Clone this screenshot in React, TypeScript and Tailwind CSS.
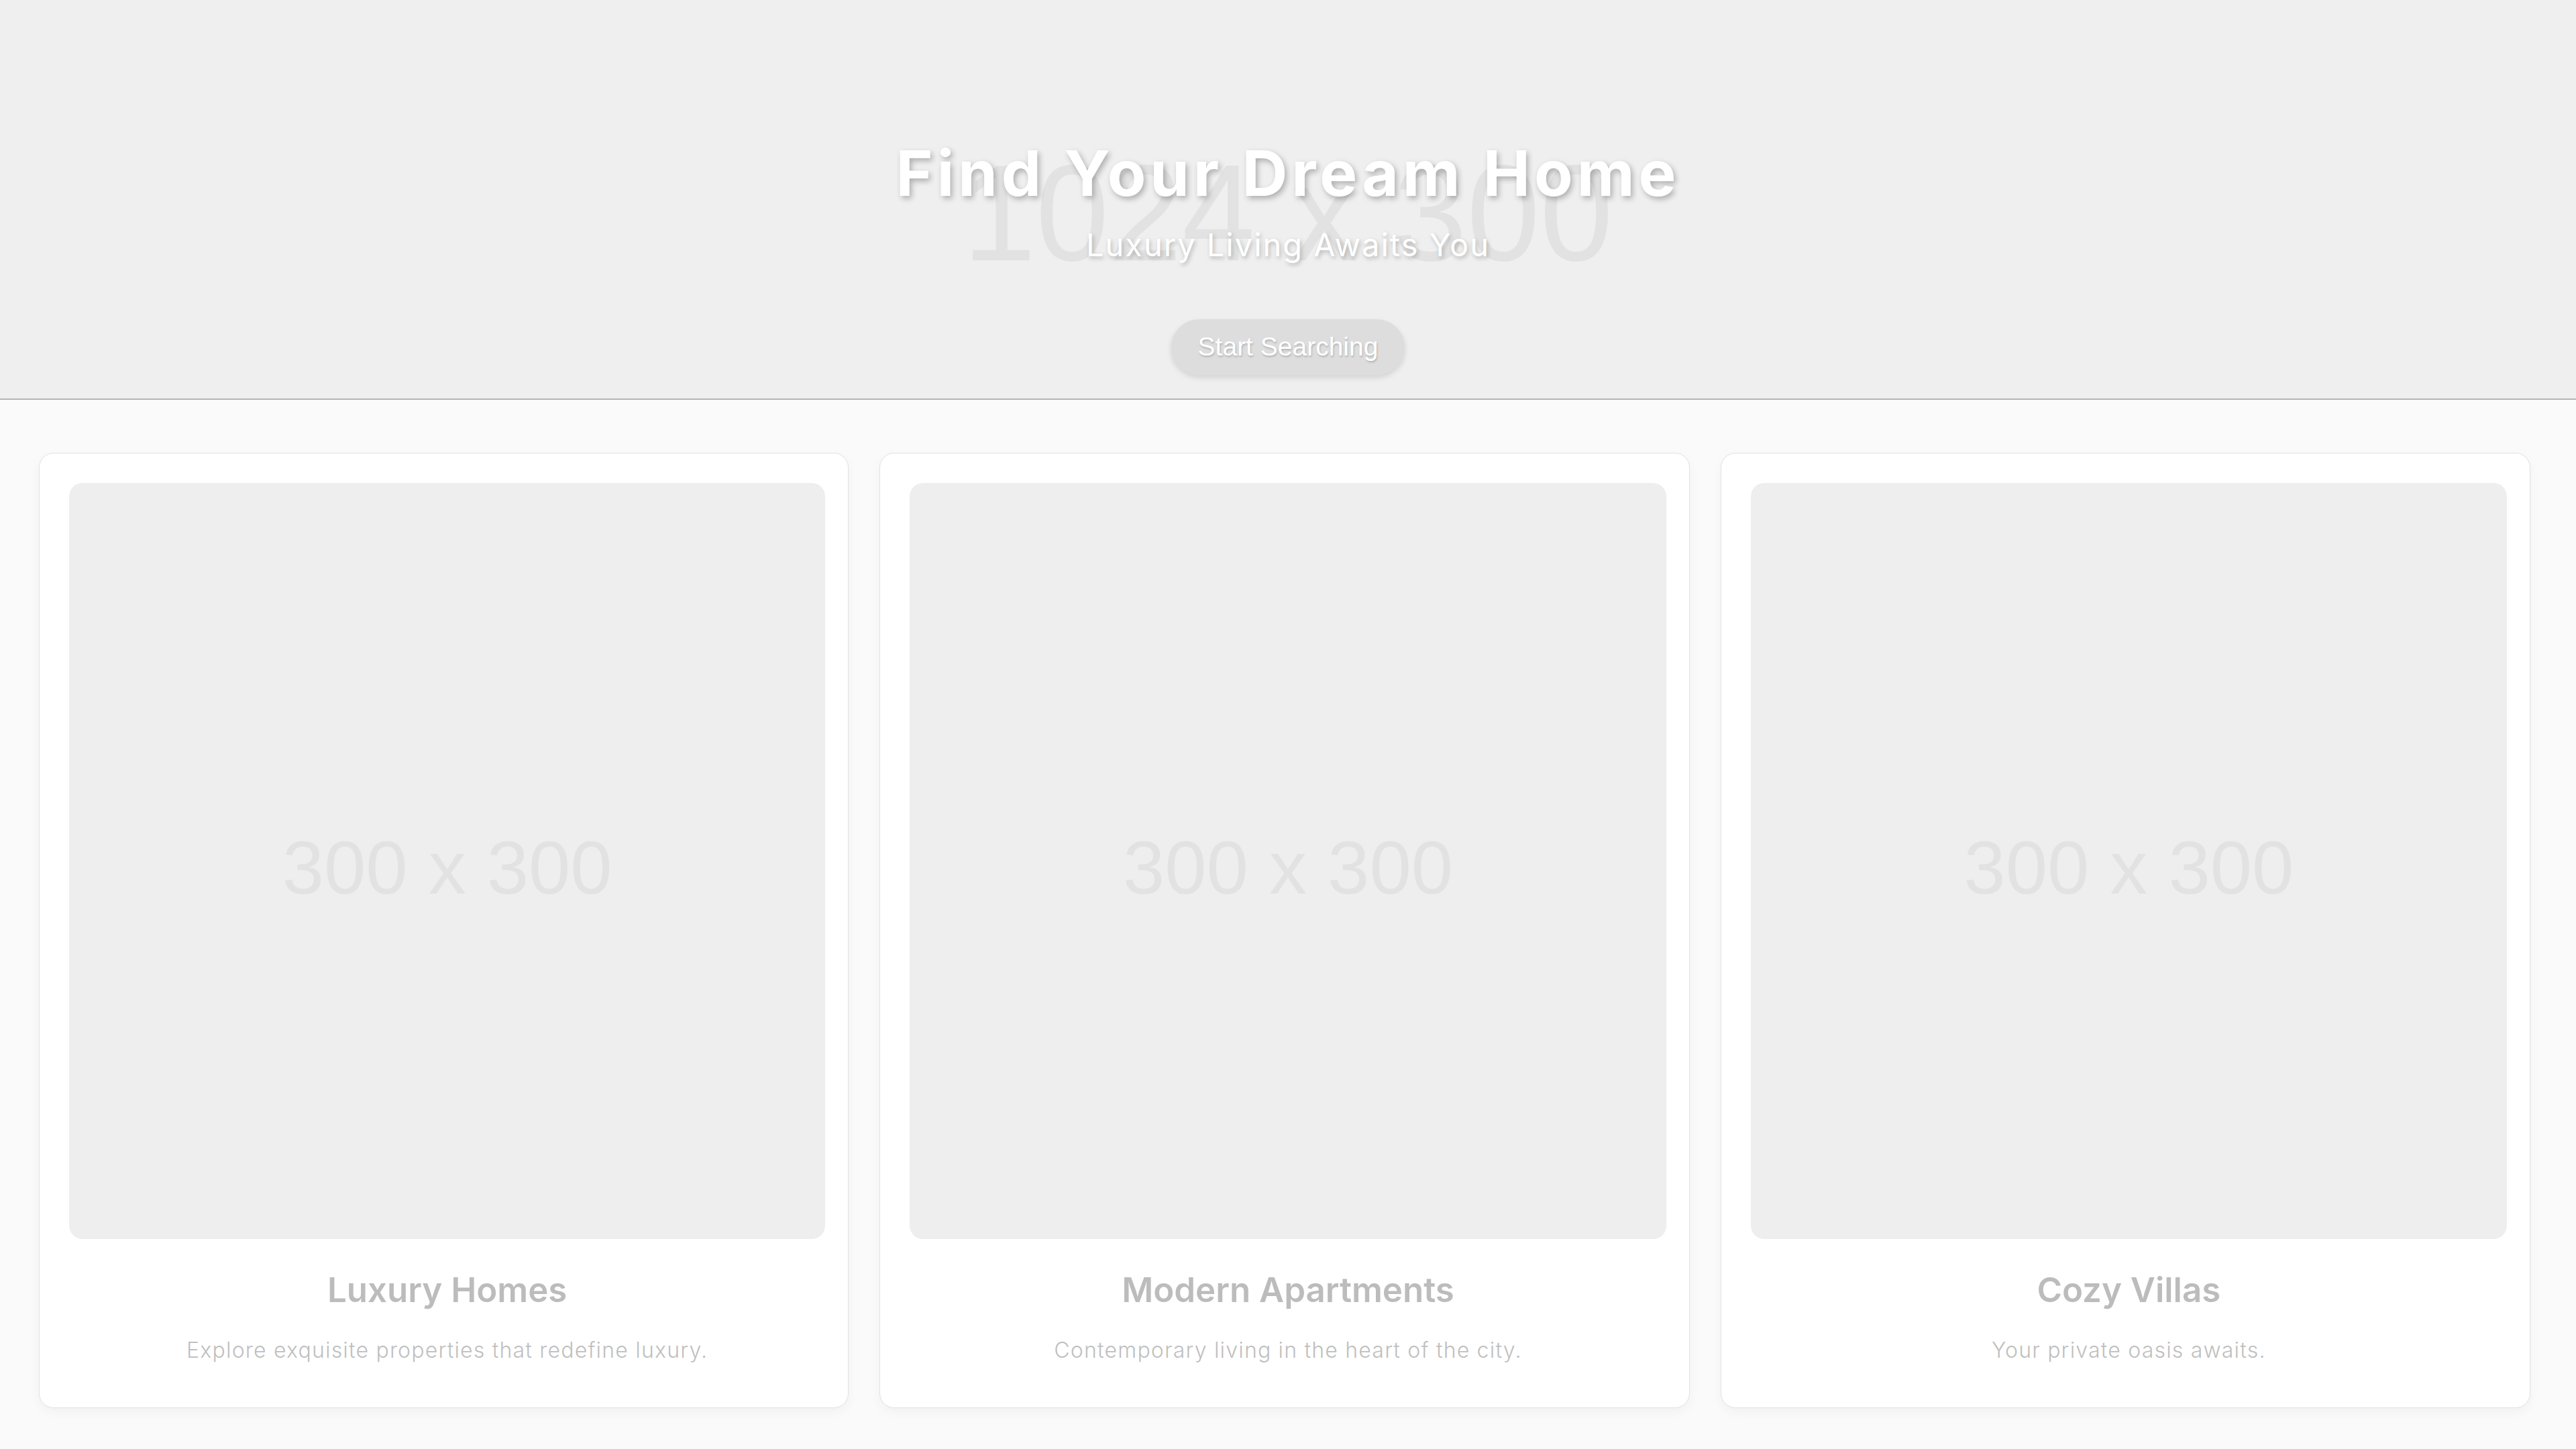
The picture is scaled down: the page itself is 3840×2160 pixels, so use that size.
import React from "react";

const cards = [
  { title: "Luxury Homes", desc: "Explore exquisite properties that redefine luxury." },
  { title: "Modern Apartments", desc: "Contemporary living in the heart of the city." },
  { title: "Cozy Villas", desc: "Your private oasis awaits." },
];

export default function App() {
  return (
    <div className="min-h-screen w-full bg-[#fafafa] font-['Inter',sans-serif]">
      <header className="relative h-[596px] overflow-hidden border-b-2 border-[#b4b4b4] bg-[#efefef]">
        <div className="absolute inset-0 flex items-center justify-center pt-[40px]">
          <span className="scale-x-[0.96] font-['Liberation_Sans',Arial,sans-serif] text-[204px] leading-none text-[#e2e2e2]">
            1024 x 300
          </span>
        </div>
        <div className="relative flex flex-col items-center pt-[202px]">
          <h1 className="text-[94px] font-bold leading-[1.2] tracking-[6px] text-white [text-shadow:3px_4px_8px_rgba(0,0,0,0.28)]">
            Find Your Dream Home
          </h1>
          <p className="mt-[15px] text-[47px] font-normal leading-[1.5] tracking-[2px] text-white [text-shadow:2px_3px_6px_rgba(0,0,0,0.25)]">
            Luxury Living Awaits You
          </p>
          <button className="mt-[76px] rounded-full bg-[#dddddd] px-[40px] py-[19px] font-['Liberation_Sans',Arial,sans-serif] text-[39px] leading-[1.15] text-white shadow-[0_4px_8px_rgba(0,0,0,0.12)] [text-shadow:1px_2px_3px_rgba(0,0,0,0.2)]">
            Start Searching
          </button>
        </div>
      </header>

      <main className="grid grid-cols-3 gap-[46px] pl-[58px] pr-[68px] pt-[79px] pb-[61px]">
        {cards.map((c) => (
          <div
            key={c.title}
            className="flex flex-col items-center rounded-[22px] border border-[#e2e2e2] bg-white pl-[44px] pr-[34px] pt-[44px] pb-[61px] shadow-[0_6px_16px_rgba(0,0,0,0.04)]"
          >
            <div className="flex aspect-square w-full items-center justify-center rounded-[20px] bg-[#eeeeee] pt-[20px]">
              <span className="font-['Liberation_Sans',Arial,sans-serif] text-[112px] leading-none text-[#e2e2e2]">
                300 x 300
              </span>
            </div>
            <h2 className="mt-[45px] text-[51px] font-semibold leading-[1.2] text-[#bcbcbc]">
              {c.title}
            </h2>
            <p className="mt-[35px] text-[32px] font-light leading-[1.5] tracking-[1.2px] text-[#bfbfbf]">
              {c.desc}
            </p>
          </div>
        ))}
      </main>
    </div>
  );
}
